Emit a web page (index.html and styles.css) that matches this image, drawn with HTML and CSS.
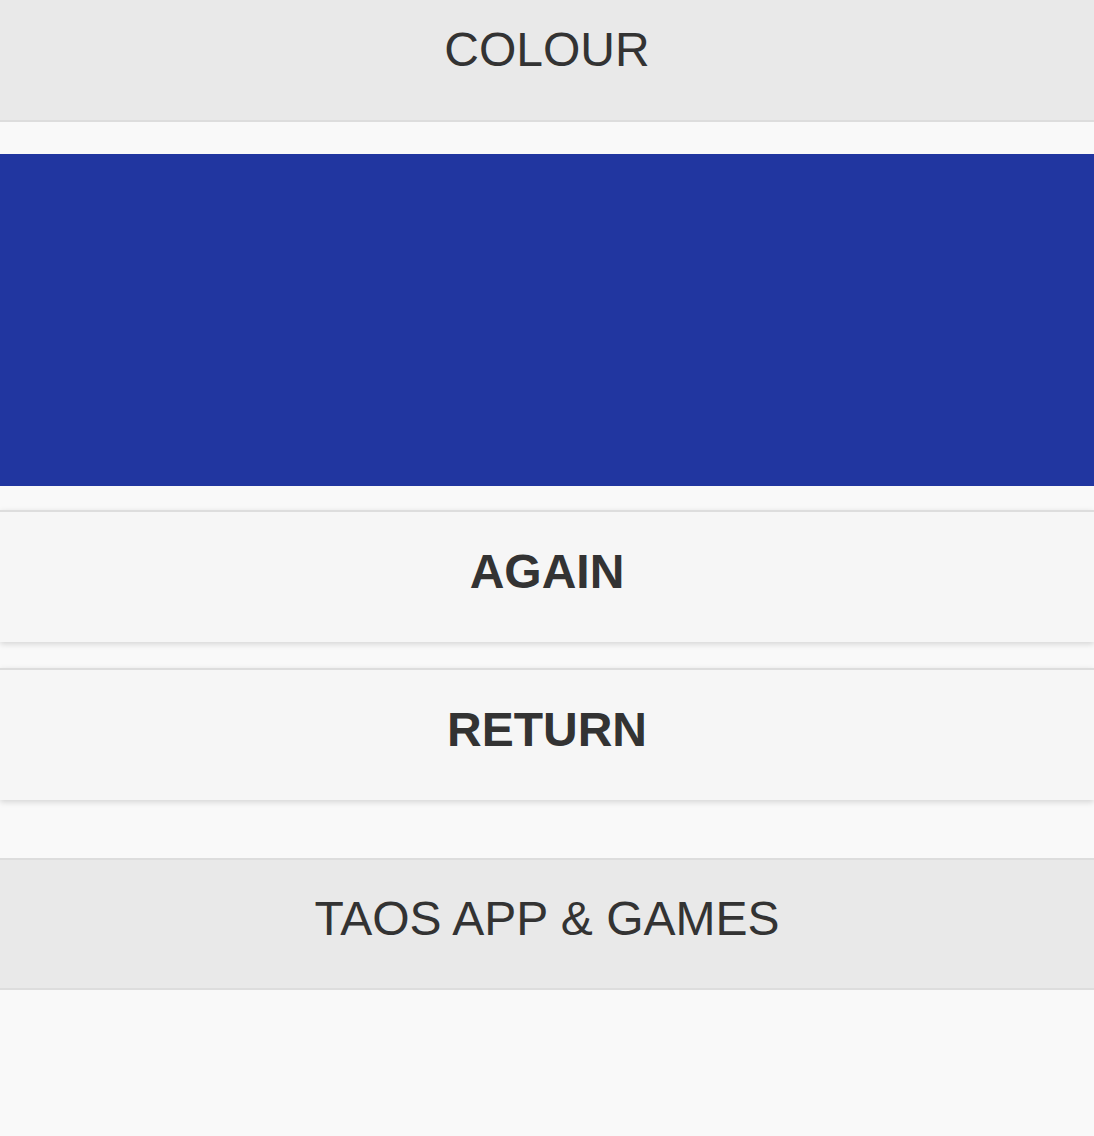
FILE: index.html
```html
<!DOCTYPE html>
<html>
<head>
<meta charset="utf-8">
<link rel="stylesheet" href="styles.css">
</head>
<body>
<div class="page">
  <header class="bar header"><h1 class="bar-title">COLOUR</h1></header>
  <main class="content">
    <div class="swatch"></div>
    <a class="btn btn-first" href="#">AGAIN</a>
    <a class="btn btn-second" href="#">RETURN</a>
  </main>
  <footer class="bar footer"><h2 class="bar-title">TAOS APP &amp; GAMES</h2></footer>
</div>
</body>
</html>
```
FILE: styles.css
```css
html, body {
  margin: 0;
  padding: 0;
  background: #f9f9f9;
  height: 100%;
}
body {
  font-family: "Liberation Sans", Arial, Helvetica, sans-serif;
  color: #333;
}
.page {
  display: flex;
  flex-direction: column;
}
.bar {
  background: #e9e9e9;
  text-align: center;
}
.bar-title {
  margin: 0;
  font-size: 48px;
  line-height: 56px;
  font-weight: normal;
  color: #333;
}
.header {
  padding: 22px 0 42px;
  border-bottom: 2px solid #ddd;
}
.footer {
  margin-top: 58px;
  padding: 31px 0 41px;
  border-top: 2px solid #ddd;
  border-bottom: 2px solid #ddd;
}
.content {
  display: flex;
  flex-direction: column;
  padding-top: 32px;
}
.swatch {
  height: 332px;
  background: #2136a0;
}
.btn {
  display: block;
  text-align: center;
  text-decoration: none;
  color: #333;
  font-size: 48px;
  line-height: 56px;
  font-weight: bold;
  background: #f6f6f6;
  border-top: 2px solid #ddd;
  padding: 32px 0 42px;
  box-shadow: 0 2px 6px rgba(0, 0, 0, 0.15);
}
.btn-first {
  margin-top: 24px;
}
.btn-second {
  margin-top: 26px;
}
```
